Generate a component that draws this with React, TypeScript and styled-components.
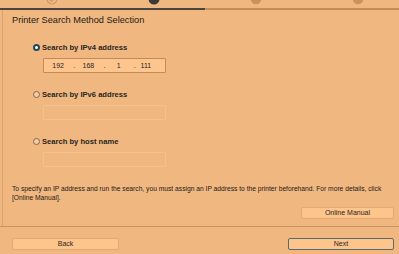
import styled, { createGlobalStyle } from 'styled-components';

const GlobalStyle = createGlobalStyle`
  html, body {
    margin: 0;
    padding: 0;
    background: #f0b880;
  }
  * {
    box-sizing: border-box;
  }
`;

const steps = ['done', 'current', 'todo', 'todo'];

const ipv4 = ['192', '168', '1', '111'];

export default function App() {
  return (
    <Page>
      <GlobalStyle />
      <Steps>
        {steps.map((s, i) => (
          <StepCell key={i}>
            <StepDot state={s} />
          </StepCell>
        ))}
      </Steps>
      <Progress />

      <Main>
        <Title>Printer Search Method Selection</Title>

        <Options>
          <Option>
            <RadioRow>
              <Radio $checked />
              <RadioLabel>Search by IPv4 address</RadioLabel>
            </RadioRow>
            <IpField $active>
              {ipv4.map((n, i) => (
                <Segment key={i} $last={i === ipv4.length - 1}>
                  <span>{n}</span>
                  {i < ipv4.length - 1 && <Dot>.</Dot>}
                </Segment>
              ))}
            </IpField>
          </Option>

          <Option>
            <RadioRow>
              <Radio />
              <RadioLabel>Search by IPv6 address</RadioLabel>
            </RadioRow>
            <IpField />
          </Option>

          <Option>
            <RadioRow>
              <Radio />
              <RadioLabel>Search by host name</RadioLabel>
            </RadioRow>
            <IpField />
          </Option>
        </Options>

        <Note>
          To specify an IP address and run the search, you must assign an IP
          address to the printer beforehand. For more details, click
          <br />
          [Online Manual].
        </Note>

        <ManualRow>
          <Button $width={93}>Online Manual</Button>
        </ManualRow>
      </Main>

      <Footer>
        <Button $width={107}>Back</Button>
        <Button $width={106} $primary>
          Next
        </Button>
      </Footer>
    </Page>
  );
}

function StepDot({ state }: { state: string }) {
  if (state === 'current') {
    return (
      <svg width="12" height="12" viewBox="0 0 12 12">
        <circle cx="6" cy="6" r="5.5" fill="#3c3a38" />
        <circle cx="6" cy="5" r="2" fill="#6a625a" />
      </svg>
    );
  }
  if (state === 'todo') {
    return (
      <svg width="12" height="12" viewBox="0 0 12 12">
        <circle cx="6" cy="6" r="5.2" fill="#c99361" />
        <circle cx="6" cy="5" r="2" fill="#d9a470" />
      </svg>
    );
  }
  return (
    <svg width="12" height="12" viewBox="0 0 12 12">
      <circle cx="6" cy="6" r="5" fill="none" stroke="#d09a69" strokeWidth="1.2" />
      <path d="M3.5 6.5 L5.5 8.5 L8.5 5" fill="none" stroke="#d09a69" strokeWidth="1.1" />
    </svg>
  );
}

const Page = styled.div`
  width: 399px;
  height: 254px;
  overflow: hidden;
  background: #f0b880;
  font-family: 'Liberation Sans', Arial, sans-serif;
  color: #1c1a18;
  display: flex;
  flex-direction: column;
`;

const Steps = styled.div`
  height: 8px;
  display: grid;
  grid-template-columns: repeat(4, 102px);
  padding-left: 1px;
  overflow: hidden;
`;

const StepCell = styled.div`
  display: flex;
  justify-content: center;
  margin-top: -7px;
`;

const Progress = styled.div`
  height: 2px;
  background: linear-gradient(to right, #4a4540 0, #4a4540 205px, #c48d5a 205px);
`;

const Main = styled.div`
  flex: 1;
  margin-left: 2px;
  border-left: 1px solid #d9a26c;
  padding: 4px 5px 0 9px;
  display: flex;
  flex-direction: column;
`;

const Title = styled.div`
  font-size: 9.2px;
  line-height: 12px;
  height: 12px;
  white-space: nowrap;
`;

const Options = styled.div`
  margin: 16px 0 0 21px;
  display: flex;
  flex-direction: column;
  gap: 16px;
`;

const Option = styled.div`
  display: flex;
  flex-direction: column;
  gap: 6px;
`;

const RadioRow = styled.label`
  display: flex;
  align-items: center;
  height: 10px;
  gap: 2px;
`;

const Radio = styled.span<{ $checked?: boolean }>`
  width: 7px;
  height: 7px;
  border-radius: 50%;
  flex: none;
  background: ${(p) => (p.$checked ? '#ffffff' : '#f6cc9e')};
  border: ${(p) => (p.$checked ? '2px solid #1d4862' : '1px solid #77695c')};
`;

const RadioLabel = styled.span`
  font-size: 7.6px;
  font-weight: 700;
  color: #2a2520;
  white-space: nowrap;
`;

const IpField = styled.div<{ $active?: boolean }>`
  margin-left: 10px;
  width: 123px;
  height: 15px;
  border: 1px solid ${(p) => (p.$active ? '#c28b58' : '#f4c28e')};
  border-radius: 1px;
  background: ${(p) => (p.$active ? '#fdc58d' : 'transparent')};
  display: grid;
  grid-template-columns: repeat(4, 1fr);
  align-items: center;
  font-size: 7px;
  color: #2a2622;
`;

const Segment = styled.div<{ $last?: boolean }>`
  display: grid;
  grid-template-columns: 1fr 4px;
  align-items: center;
  text-align: center;
  margin-right: ${(p) => (p.$last ? '4px' : '-2px')};
`;

const Dot = styled.span`
  text-align: center;
`;

const Note = styled.div`
  margin-top: 17px;
  font-size: 6.7px;
  line-height: 9px;
  white-space: nowrap;
`;

const ManualRow = styled.div`
  margin-top: 5px;
  display: flex;
  justify-content: flex-end;
`;

const Button = styled.button<{ $width: number; $primary?: boolean }>`
  width: ${(p) => p.$width}px;
  height: 12px;
  padding: 0;
  font-family: 'Liberation Sans', Arial, sans-serif;
  font-size: 7px;
  line-height: 10px;
  color: #2a2622;
  background: #fdc48c;
  border: 1px solid ${(p) => (p.$primary ? '#5b6b69' : '#e2aa72')};
  border-radius: 2px;
`;

const Footer = styled.div`
  height: 28px;
  border-top: 1px solid #c9935f;
  padding: 11px 5px 0 12px;
  display: flex;
  justify-content: space-between;
  align-items: flex-start;
`;
